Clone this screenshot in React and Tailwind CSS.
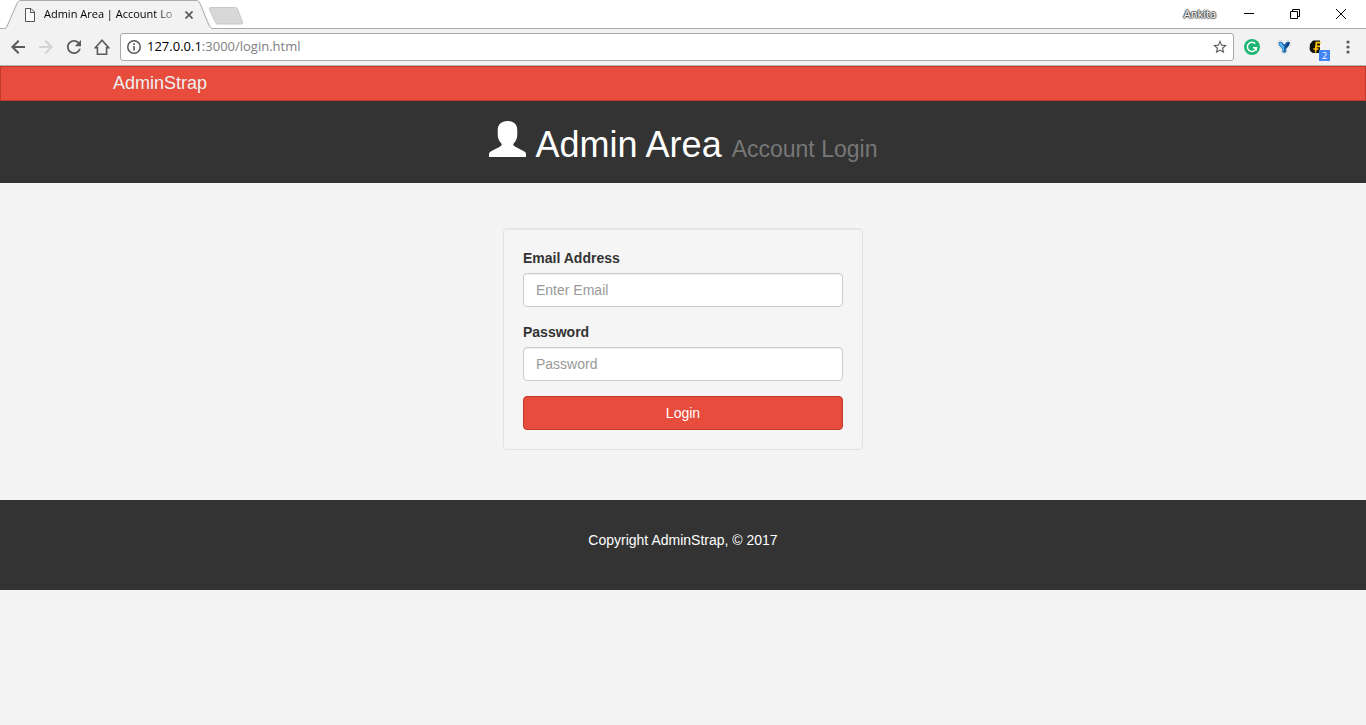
import React from "react";

function Tab() {
  return (
    <div className="relative h-[29px] w-[214px] shrink-0">
      <svg className="absolute inset-0" width="214" height="29" viewBox="0 0 214 29" aria-hidden="true">
        <path d="M5 29 L18 1 H199 L213 29 Z" fill="#f2f2f2" />
        <path
          d="M0 28.500 H4 C6 28.500 6.500 27.500 7.200 26 L17 3.500 C18 1 19 .5 21 .5 H196 C198 .5 199 1 200 3.500 L209 25.500 C210 27.500 211 28.500 213 28.500 H214"
          fill="#f2f2f2"
          stroke="#ababab"
        />
      </svg>
      <div className="relative flex h-full items-center pl-[24px]">
        <svg width="12" height="14" viewBox="0 0 12 14" fill="none" stroke="#555" aria-hidden="true">
          <path d="M1.500 .5 H7 L10.500 4 V13.500 H1.500 Z M6.500 .5 V4.500 H10.500" fill="#fafafa" />
        </svg>
        <div className="ml-2 w-[134px] whitespace-nowrap bg-linear-to-r from-black from-80% to-[#ccc] bg-clip-text text-[11px] text-transparent">
          Admin Area | Account Lo
        </div>
        <button type="button" aria-label="Close tab" className="ml-[3px] flex size-4 items-center justify-center">
          <svg width="8" height="8" viewBox="0 0 8 8" stroke="#5a5a5a" strokeWidth="1.700">
            <path d="M.5 .5 L7.500 7.500 M7.500 .5 L.5 7.500" />
          </svg>
        </button>
      </div>
    </div>
  );
}

function TitleBar() {
  return (
    <div className="flex h-[29px] border-b border-[#ababab] bg-white">
      <Tab />
      <button type="button" aria-label="New tab" className="-ml-[7px] h-[28px] shrink-0">
        <svg width="38" height="28" viewBox="0 0 38 28">
          <path
            d="M4 7.500 H28.500 C29.500 7.500 30 8 30.500 9 L35.500 22 C36 23.300 35.500 24 34.500 24 H11 C9.500 24 9 23.500 8.500 22.500 L2.500 9.500 C2 8.300 2.500 7.500 4 7.500 Z"
            fill="#d8d8d8"
            stroke="#c6c6c6"
          />
        </svg>
      </button>
      <div className="mr-[2px] ml-auto flex h-[28px] items-center">
        <span className="mr-[10px] text-[11px] text-white [text-shadow:1px_0_1px_#444,-1px_0_1px_#444,0_1px_1px_#444,0_-1px_1px_#444]">
          Ankita
        </span>
        <button type="button" aria-label="Minimize" className="flex h-full w-[46px] items-center justify-center">
          <svg width="10" height="10" viewBox="0 0 10 10" shapeRendering="crispEdges">
            <path d="M0 4.500 H10" stroke="#000" />
          </svg>
        </button>
        <button type="button" aria-label="Restore" className="flex h-full w-[46px] items-center justify-center">
          <svg width="10" height="10" viewBox="0 0 10 10" fill="none" stroke="#000">
            <path d="M.5 2.500 H7.500 V9.500 H.5 Z M2.500 2.500 V.5 H9.500 V7.500 H7.500" />
          </svg>
        </button>
        <button type="button" aria-label="Close" className="flex h-full w-[46px] items-center justify-center">
          <svg width="10" height="10" viewBox="0 0 10 10" stroke="#000">
            <path d="M0 0 L10 10 M10 0 L0 10" />
          </svg>
        </button>
      </div>
    </div>
  );
}

function NavButton({ label, children, className = "text-[#5a5a5a]" }) {
  return (
    <button type="button" aria-label={label} className={`flex size-7 items-center justify-center ${className}`}>
      {children}
    </button>
  );
}

function Toolbar() {
  return (
    <div className="flex h-[37px] items-center border-b border-[#b4b4b4] bg-[#f2f2f2] pl-1">
      <NavButton label="Back">
        <svg width="14" height="14" viewBox="0 0 14 14" fill="none" stroke="currentColor" strokeWidth="2">
          <path d="M14 7 H1.500 M7.700 .7 L1.400 7 L7.700 13.300" />
        </svg>
      </NavButton>
      <NavButton label="Forward" className="text-[#d3d3d3]">
        <svg width="14" height="14" viewBox="0 0 14 14" fill="none" stroke="currentColor" strokeWidth="2">
          <path d="M0 7 H12.500 M6.300 .7 L12.600 7 L6.300 13.300" />
        </svg>
      </NavButton>
      <NavButton label="Reload">
        <svg width="14" height="14" viewBox="4 4 16 16" fill="currentColor">
          <path d="M17.650 6.350C16.200 4.900 14.210 4 12 4c-4.420 0-7.990 3.580-7.990 8s3.570 8 7.990 8c3.730 0 6.840-2.550 7.730-6h-2.080c-.82 2.330-3.040 4-5.650 4-3.310 0-6-2.690-6-6s2.690-6 6-6c1.660 0 3.140.69 4.220 1.780L13 11h7V4l-2.350 2.350z" />
        </svg>
      </NavButton>
      <NavButton label="Home">
        <svg width="16" height="16" viewBox="0 0 16 16" fill="none" stroke="currentColor" strokeWidth="1.600">
          <path d="M8 1.300 L1.400 8.700 H3.400 V15.200 H12.600 V8.700 H14.600 Z" />
        </svg>
      </NavButton>
      <div className="ml-1 flex h-7 min-w-0 grow items-center rounded-[3px] border border-[#a9a9a9] bg-white px-[6px]">
        <svg width="14" height="14" viewBox="0 0 14 14" fill="none" stroke="#555" aria-hidden="true">
          <circle cx="7" cy="7" r="6.250" strokeWidth="1.500" />
          <path d="M7 6 V10.500 M7 3.300 V5" strokeWidth="1.600" />
        </svg>
        <div className="ml-[6px] grow text-[13px] text-[#808080]">
          <span className="text-black">127.0.0.1</span>:3000/login.html
        </div>
        <button type="button" aria-label="Bookmark this page">
          <svg width="14" height="14" viewBox="2 2 20 20" fill="#5a5a5a">
            <path d="M22 9.240l-7.190-.62L12 2 9.190 8.630 2 9.240l5.460 4.730L5.820 21 12 17.270 18.180 21l-1.630-7.030L22 9.240zM12 15.400l-3.760 2.270 1-4.280-3.320-2.880 4.380-.38L12 6.100l1.710 4.040 4.380.38-3.320 2.880 1 4.280L12 15.400z" />
          </svg>
        </button>
      </div>
      <div className="flex w-[132px] shrink-0 items-center pl-[2px]">
        <button type="button" aria-label="Grammar checker" className="flex w-8 justify-center">
          <svg width="16" height="16" viewBox="0 0 16 16">
            <circle cx="8" cy="8" r="8" fill="#1fb673" />
            <path d="M11.200 4.600 A4.600 4.600 0 1 0 12.500 8.800 H9" fill="none" stroke="#fff" strokeWidth="1.500" />
            <path d="M12.900 8.200 V12 L9.800 8.900 Z" fill="#fff" />
          </svg>
        </button>
        <button type="button" aria-label="Extension" className="flex w-8 justify-center">
          <svg width="16" height="16" viewBox="0 0 16 16">
            <path d="M1 3.500 L3 1.500 H6 L8 3.500 L10 1.500 H13 L15.200 3.500 L14.500 7 L10.800 11 V14 L8.500 15.300 L5.800 14 V11 L1.800 7 Z" fill="#fff" stroke="#dcdcdc" />
            <path d="M2.300 3.500 L4 2.500 L6 3 L8.200 5.500 L10.500 3 L12.500 2.500 L14 3.500 L13.200 6.500 L10.200 10 V13 L8.200 14 L6.300 13 V10 L3 6.500 Z" fill="#1a67ae" />
            <path d="M3 4 L4.600 3.300 L8 7.500 V12.500 L7 12 V9.700 L3.600 6 Z" fill="#59b9f0" />
            <path d="M12.300 3 L13.500 3.800 L12.800 6 L9.800 9.500 L9.500 7.500 Z" fill="#123d70" />
          </svg>
        </button>
        <button type="button" aria-label="Extension with 2 notifications" className="relative flex w-8 justify-center">
          <svg width="16" height="16" viewBox="0 0 16 16">
            <path d="M5 1.500 H12 V14 H5 L2.500 12.500 L1.500 10 L2 5 Z" fill="#111" />
            <path d="M12.800 3.700 H8.400 L7.600 13.500 M5.300 10 H10.500 M7 7.300 H12" fill="none" stroke="#fdc60b" strokeWidth="1.700" />
          </svg>
          <span className="absolute top-[11px] left-[19px] flex h-[11px] w-[11px] items-center justify-center bg-[#4285f4] text-[9px] leading-none text-white">
            2
          </span>
        </button>
        <button type="button" aria-label="Menu" className="flex w-8 justify-center">
          <svg width="4" height="14" viewBox="0 0 4 14" fill="#5a5a5a">
            <circle cx="2" cy="2" r="1.600" />
            <circle cx="2" cy="7" r="1.600" />
            <circle cx="2" cy="12" r="1.600" />
          </svg>
        </button>
      </div>
    </div>
  );
}

function Field({ id, label, type, placeholder }) {
  return (
    <div className="mb-[15px]">
      <label htmlFor={id} className="mb-[5px] block font-bold">
        {label}
      </label>
      <input
        id={id}
        type={type}
        placeholder={placeholder}
        className="block h-[34px] w-full rounded-sm border border-[#ccc] bg-white px-3 py-[6px] text-[#555] shadow-[inset_0_1px_1px_rgba(0,0,0,0.075)] placeholder:text-[#999]"
      />
    </div>
  );
}

export default function App() {
  return (
    <div className="flex min-h-screen flex-col bg-[#f4f4f4]">
      <div className="font-['Open_Sans','Noto_Sans',sans-serif]">
        <TitleBar />
        <Toolbar />
      </div>
      <div className="font-['Liberation_Sans',Arial,sans-serif] text-[14px] leading-5 text-[#333]">
        <nav className="border border-[#c0392b] bg-[#e74c3c]">
          <div className="mx-auto flex h-[33px] max-w-[1170px] items-center px-[15px] pb-[2px]">
            <a href="#home" className="text-[18px] leading-5 text-[#ecf0f1]">
              AdminStrap
            </a>
          </div>
        </nav>
        <header className="bg-[#333] pt-5 pb-[18px]">
          <h1 className="flex items-baseline justify-center text-[36px] leading-10 text-white">
            <svg className="mr-[10px]" width="37" height="36" viewBox="0 0 36 36" preserveAspectRatio="none" fill="#fff" aria-hidden="true">
              <path d="M18 0 C24 0 27.500 3.500 27.500 9 V14 C27.500 17.500 26 20.500 24 22.500 C23 24 24 25 26 26 L33.500 30 C35.500 31 36 32 36 33.500 V36 H0 V33.500 C0 32 .7 31 2.500 30 L10 26 C12 25 13 24 12 22.500 C10 20.500 8.500 17.500 8.500 14 V9 C8.500 3.500 12 0 18 0 Z" />
            </svg>
            Admin Area
            <small className="ml-[10px] text-[23px] leading-6 text-[#777]">Account Login</small>
          </h1>
        </header>
        <main className="px-[15px] pt-[45px] pb-[50px]">
          <form className="mx-auto max-w-[360px] rounded-sm border border-[#e3e3e3] bg-[#f5f5f5] p-[19px] shadow-[inset_0_1px_1px_rgba(0,0,0,0.05)]">
            <Field id="email" label="Email Address" type="email" placeholder="Enter Email" />
            <Field id="password" label="Password" type="password" placeholder="Password" />
            <button
              type="submit"
              className="block h-[34px] w-full rounded-sm border border-[#c0392b] bg-[#e74c3c] text-center text-white"
            >
              Login
            </button>
          </form>
        </main>
        <footer className="bg-[#333] px-[15px] pt-[30px] pb-10 text-center text-white">
          <p>Copyright AdminStrap, © 2017</p>
        </footer>
      </div>
    </div>
  );
}
